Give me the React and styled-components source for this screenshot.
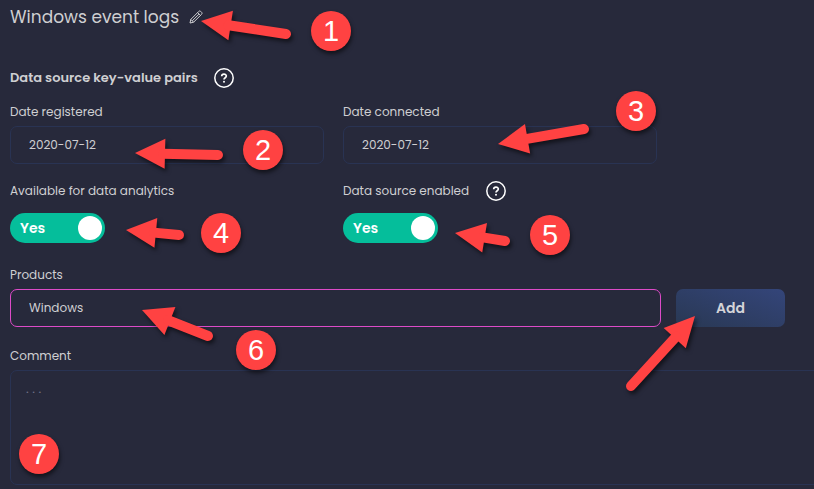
import React from "react";
import styled, { createGlobalStyle } from "styled-components";

const GlobalStyle = createGlobalStyle`
  *, *::before, *::after { box-sizing: border-box; }
  body {
    margin: 0;
    background: #27293b;
    color: #cfcfd2;
    font-family: Poppins, Inter, sans-serif;
    font-size: 13px;
    overflow: hidden;
  }
`;

const Page = styled.main`
  position: relative;
  display: flex;
  flex-direction: column;
  min-height: 100vh;
  padding-left: 10px;
`;

const TitleBar = styled.header`
  display: flex;
  align-items: center;
  gap: 10px;
  height: 34px;
`;

const Title = styled.h1`
  margin: 0;
  font-size: 17px;
  font-weight: 400;
  line-height: 24px;
`;

const IconButton = styled.button`
  display: flex;
  padding: 0;
  border: 0;
  background: none;
  color: inherit;
  cursor: pointer;
`;

const SectionHeader = styled.div`
  display: flex;
  align-items: center;
  gap: 16px;
  height: 24px;
  margin-top: 32px;
`;

const SectionTitle = styled.h2`
  margin: 0;
  font-size: 13px;
  font-weight: 600;
`;

const Columns = styled.div`
  display: grid;
  grid-template-columns: 1fr 1fr;
  gap: 17px 19px;
  margin-top: 12px;
  padding-right: 157px;
`;

const Field = styled.div`
  display: flex;
  flex-direction: column;
  align-items: ${(p) => (p.$start ? "flex-start" : "stretch")};
  gap: ${(p) => (p.$start ? 12 : 4)}px;
  margin-top: ${(p) => p.$top || 0}px;
`;

const LabelRow = styled.div`
  display: flex;
  align-items: center;
  gap: 17px;
  height: 20px;
`;

const Label = styled.label`
  font-size: 12px;
  line-height: 20px;
`;

const TextInput = styled.input`
  width: 100%;
  min-width: 0;
  height: 38px;
  padding: 0 18px;
  border: 1px solid ${(p) => (p.$active ? "#dd4bc8" : "#293353")};
  border-radius: 7px;
  outline: none;
  background: transparent;
  color: inherit;
  font: inherit;
  font-size: 12px;
`;

const Comment = styled.textarea`
  display: block;
  height: 115px;
  margin-right: -20px;
  padding: 8px 15px;
  border: 1px solid #293353;
  border-radius: 7px;
  outline: none;
  resize: none;
  background: transparent;
  color: inherit;
  font: inherit;
  &::placeholder { color: #73748a; opacity: 1; }
`;

const InputRow = styled.div`
  display: grid;
  grid-template-columns: 1fr 109px;
  gap: 15px;
  padding-right: 29px;
`;

const AddButton = styled.button`
  border: 0;
  border-radius: 7px;
  background: linear-gradient(20deg, #293853, #34457a);
  color: #d4d4d8;
  font: inherit;
  font-size: 14px;
  font-weight: 600;
  cursor: pointer;
`;

const Switch = styled.label`
  display: flex;
  align-items: center;
  justify-content: space-between;
  width: 95px;
  height: 30px;
  padding: 0 3px 0 10px;
  border-radius: 15px;
  background: #05be9b;
  color: #fff;
  font-size: 14px;
  font-weight: 600;
  cursor: pointer;
`;

const SwitchInput = styled.input`
  appearance: none;
  width: 24px;
  height: 24px;
  margin: 0;
  border-radius: 50%;
  background: #fff;
`;

const Annotations = styled.div`
  position: absolute;
  inset: 0;
  pointer-events: none;
`;

const Arrows = styled.svg`
  position: absolute;
  top: 0;
  left: 0;
  overflow: visible;
  filter: drop-shadow(2px 3px 2px rgba(0, 0, 0, 0.55));
`;

const Badge = styled.span`
  position: absolute;
  left: ${(p) => p.$x - 20}px;
  top: ${(p) => p.$y - 20}px;
  width: 40px;
  height: 40px;
  border-radius: 50%;
  background: #ff4242;
  box-shadow: 1px 3px 4px rgba(0, 0, 0, 0.55);
  color: #fff;
  font-family: "Liberation Sans", Arial, sans-serif;
  font-size: 29px;
  line-height: 41px;
  text-align: center;
`;

const PencilIcon = () => (
  <svg width="14" height="14" viewBox="0 0 14 14" fill="none" stroke="currentColor" strokeWidth="1" strokeLinejoin="round" aria-hidden="true">
    <path d="M1 13 1.8 9.4 9.7 1.5Q10.6.5 11.6 1.3L12.7 2.4Q13.5 3.4 12.6 4.3L4.6 12.2Z" />
    <path d="M1.8 9.4 4.6 12.2M8.6 2.6 11.5 5.4M3.3 10.8 10 4.1" />
  </svg>
);

const HelpIcon = () => (
  <svg width="20" height="20" viewBox="0 0 20 20" fill="none" stroke="#fff" aria-hidden="true">
    <circle cx="10" cy="10" r="9.2" strokeWidth="1.5" />
    <path d="M7.7 8.2C7.7 5.4 12.3 5.4 12.3 8.1 12.3 9.8 10 9.7 10 11.6" strokeWidth="1.7" />
    <circle cx="10" cy="13.8" r="1" fill="#fff" stroke="none" />
  </svg>
);

const arrows = [
  { tip: [201, 21], end: [286, 34] },
  { tip: [135, 153], end: [218, 155] },
  { tip: [498, 144], end: [584, 129] },
  { tip: [126, 230], end: [179, 235] },
  { tip: [455, 233], end: [505, 241] },
  { tip: [142, 310], end: [208, 336] },
  { tip: [695, 316], end: [631, 386] },
];

const badges = [
  [331, 31], [263, 150], [636, 111], [221, 233], [550, 235], [256, 350], [39, 454],
];

function Arrow({ tip, end }) {
  const dx = end[0] - tip[0];
  const dy = end[1] - tip[1];
  const length = Math.hypot(dx, dy);
  const angle = (Math.atan2(dy, dx) * 180) / Math.PI;
  return (
    <g transform={`translate(${tip[0]} ${tip[1]}) rotate(${angle})`}>
      <path d="M0 0 30-15V15Z" fill="#ff4242" />
      <path d={`M28 0H${length}`} stroke="#ff4242" strokeWidth="10" strokeLinecap="round" />
    </g>
  );
}

function Toggle({ id }) {
  return (
    <Switch>
      Yes
      <SwitchInput id={id} type="checkbox" role="switch" defaultChecked />
    </Switch>
  );
}

export default function App() {
  return (
    <>
      <GlobalStyle />
      <Page>
        <TitleBar>
          <Title>Windows event logs</Title>
          <IconButton type="button" aria-label="Edit name"><PencilIcon /></IconButton>
        </TitleBar>
        <SectionHeader>
          <SectionTitle>Data source key-value pairs</SectionTitle>
          <IconButton type="button" aria-label="Help"><HelpIcon /></IconButton>
        </SectionHeader>
        <Columns>
          <Field>
            <Label htmlFor="registered">Date registered</Label>
            <TextInput id="registered" defaultValue="2020-07-12" />
          </Field>
          <Field>
            <Label htmlFor="connected">Date connected</Label>
            <TextInput id="connected" defaultValue="2020-07-12" />
          </Field>
          <Field $start>
            <LabelRow><Label htmlFor="analytics">Available for data analytics</Label></LabelRow>
            <Toggle id="analytics" />
          </Field>
          <Field $start>
            <LabelRow>
              <Label htmlFor="enabled">Data source enabled</Label>
              <IconButton type="button" aria-label="Help"><HelpIcon /></IconButton>
            </LabelRow>
            <Toggle id="enabled" />
          </Field>
        </Columns>
        <Field $top={22}>
          <Label htmlFor="products">Products</Label>
          <InputRow>
            <TextInput id="products" defaultValue="Windows" $active />
            <AddButton type="button">Add</AddButton>
          </InputRow>
        </Field>
        <Field $top={19}>
          <Label htmlFor="comment">Comment</Label>
          <Comment id="comment" placeholder=". . ." />
        </Field>
        <Annotations>
          <Arrows width="100%" height="100%" aria-hidden="true">
            {arrows.map((a) => <Arrow key={a.tip.join()} {...a} />)}
          </Arrows>
          {badges.map(([x, y], i) => <Badge key={i} $x={x} $y={y}>{i + 1}</Badge>)}
        </Annotations>
      </Page>
    </>
  );
}
